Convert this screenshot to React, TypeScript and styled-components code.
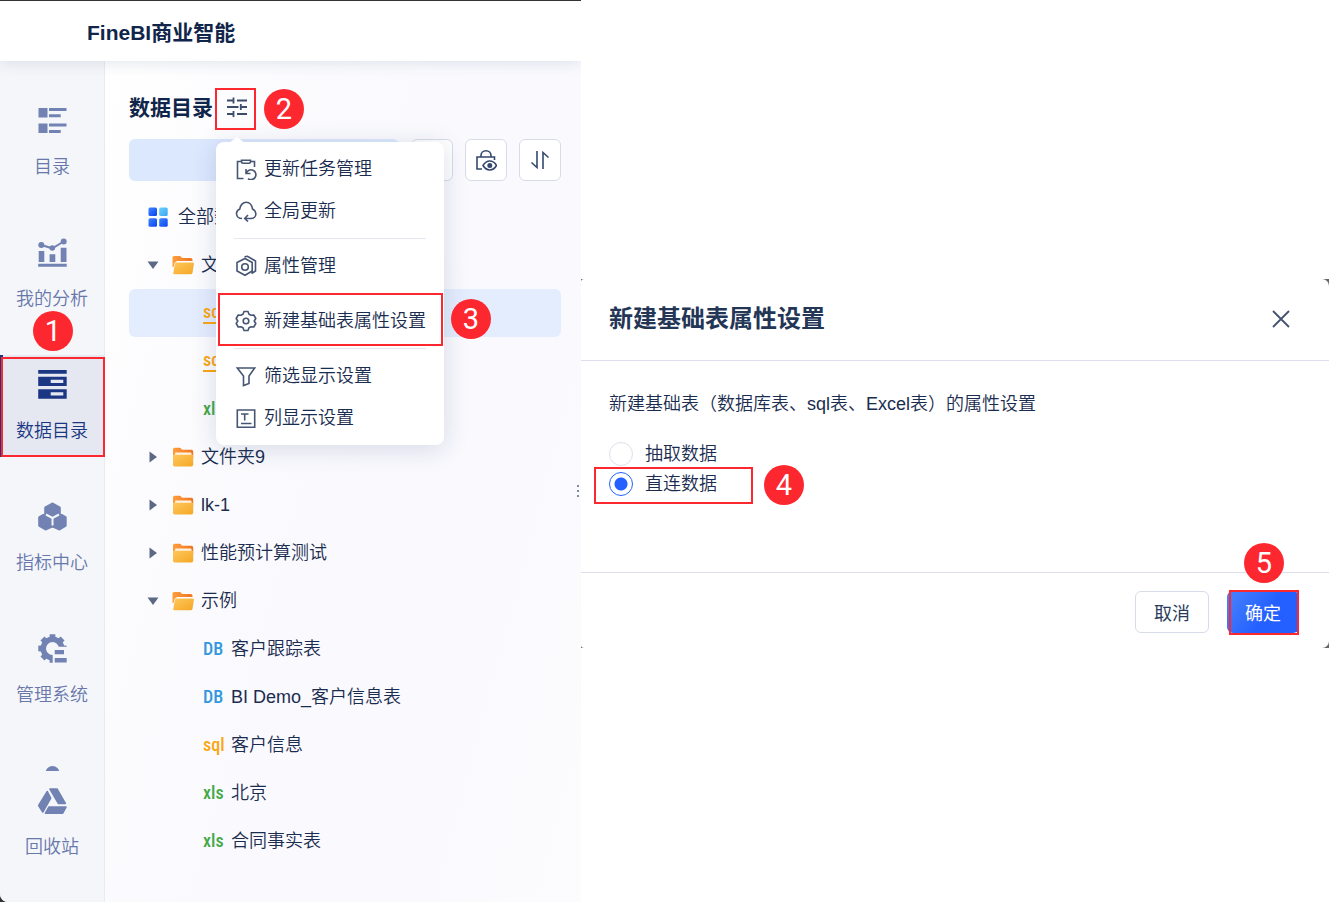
import React from 'react';
import styled, { createGlobalStyle, css } from 'styled-components';

const GlobalStyle = createGlobalStyle`
  *, *::before, *::after { box-sizing: border-box; }
  body { margin: 0; background: #fff; }
  body, button, input {
    font-family: "Liberation Sans", "Noto Sans CJK SC", sans-serif;
    font-size: 18px;
    font-weight: 350;
    color: #1a2d50;
  }
  button { border: 0; background: none; padding: 0; cursor: pointer; }
  h1, h2, p, ul, fieldset { margin: 0; padding: 0; border: 0; list-style: none; }
  svg { display: block; flex: none; }
`;

const Page = styled.div`
  display: flex;
  min-height: 100vh;
`;

/* ---------- annotations ---------- */

const Step = styled.span<{ $top: number; $left: number }>`
  position: absolute;
  top: ${(p) => p.$top}px;
  left: ${(p) => p.$left}px;
  z-index: 5;
  width: 40px;
  height: 40px;
  border-radius: 50%;
  background: #fd282f;
  color: #fff;
  font-family: Roboto, "Liberation Sans", sans-serif;
  font-size: 29px;
  font-weight: 400;
  line-height: 41px;
  text-align: center;
`;

const Outline = styled.span<{ $inset: string }>`
  position: absolute;
  inset: ${(p) => p.$inset};
  z-index: 4;
  border: 2px solid #fd282f;
  pointer-events: none;
`;

/* ---------- workspace ---------- */

const Workspace = styled.div`
  display: flex;
  flex: 0 0 581px;
  padding-top: 1px;
  background: #333;
`;

const Surface = styled.div`
  display: flex;
  flex-direction: column;
  flex: 1;
  overflow: hidden;
  border-bottom-left-radius: 8px;
  background: #fff;
`;

const TopBar = styled.header`
  position: relative;
  z-index: 1;
  display: flex;
  align-items: center;
  height: 60px;
  padding: 4px 87px 0;
  background: #fff;
  box-shadow: 0 2px 14px rgba(30, 50, 90, 0.12);
`;

const Brand = styled.h1`
  font-size: 21px;
  font-weight: 700;
  line-height: 30px;
  color: #10254a;
`;

const Body = styled.div`
  display: flex;
  flex: 1;
`;

const Sidebar = styled.nav`
  display: flex;
  flex-direction: column;
  flex: 0 0 105px;
  padding-bottom: 29px;
  background: #f5f6fa;
  box-shadow: inset -1px 0 #e8ebf2;
`;

const NavList = styled.ul`
  display: flex;
  flex: 1 1 0;
  flex-direction: column;
  gap: 30px;
  min-height: 0;
  padding-top: 30px;
  overflow: hidden;
`;

const NavItem = styled.li`
  position: relative;
  flex: none;
  height: 102px;
`;

const NavButton = styled.button<{ $active?: boolean }>`
  display: flex;
  flex-direction: column;
  align-items: center;
  width: 100%;
  height: 102px;
  gap: 16px;
  padding: 15px 1px 0 0;
  line-height: 30px;
  color: #6878ab;
  svg { color: #7182b3; }
  ${(p) =>
    p.$active &&
    css`
      background: #e5e8f1;
      box-shadow: inset 3px 0 #1b3783;
      color: #1b3783;
      svg { color: #1b3783; }
    `}
`;

const Catalog = styled.main`
  position: relative;
  flex: 1;
  padding: 27px 20px 24px 24px;
  background: linear-gradient(105deg, #fff 0%, #fbfbfe 30%, #f9f9fe 65%, #fcfcfe 100%);
`;

const CatalogHead = styled.div`
  display: flex;
  align-items: center;
  gap: 3px;
  margin-bottom: 9px;
`;

const CatalogTitle = styled.h2`
  font-size: 21px;
  font-weight: 700;
  line-height: 30px;
  padding-bottom: 2px;
  color: #10254a;
`;

const MenuAnchor = styled.div`
  position: relative;
`;

const IconButton = styled.button`
  display: grid;
  place-items: center;
  width: 42px;
  height: 42px;
  padding-bottom: 4px;
  color: #3c4c6b;
`;

const Tools = styled.div`
  display: flex;
  gap: 12px;
  margin-bottom: 12px;
`;

const AddButton = styled.button`
  flex: 1;
  border-radius: 6px;
  background: #dce8fe;
`;

const ToolButton = styled.button`
  display: grid;
  place-items: center;
  width: 42px;
  height: 42px;
  border: 1px solid #d8dce8;
  border-radius: 6px;
  background: #fff;
  color: #35486b;
`;

const depthPadding = { root: 18, folder: 18, file: 74 };

const TreeRow = styled.li<{ $kind: 'root' | 'folder' | 'file'; $selected?: boolean }>`
  display: flex;
  align-items: center;
  height: 48px;
  padding-left: ${(p) => depthPadding[p.$kind]}px;
  border-radius: 6px;
  background: ${(p) => (p.$selected ? '#e4edfe' : 'transparent')};
  line-height: 30px;
  white-space: nowrap;
`;

const Caret = styled.svg`
  width: 12px;
  height: 12px;
  margin-right: 13px;
  fill: #5b6985;
`;

const RowIcon = styled.span<{ $gap: number }>`
  margin-right: ${(p) => p.$gap}px;
`;

const kindColor = { DB: '#3397e0', sql: '#faa614', xls: '#43a848' };

const FileKind = styled.span<{ $kind: 'DB' | 'sql' | 'xls'; $live?: boolean }>`
  width: 21px;
  margin-right: 7px;
  border-bottom: ${(p) => (p.$live ? '2px solid' : '0')};
  color: ${(p) => kindColor[p.$kind]};
  font-family: "Roboto Condensed", "Liberation Sans Narrow", Roboto, sans-serif;
  font-size: 18px;
  font-weight: 500;
  line-height: 20px;
`;

/* ---------- popup menu ---------- */

const Menu = styled.div`
  position: absolute;
  top: 54px;
  left: 0;
  z-index: 3;
  width: 228px;
  padding: 5px 0 7px;
  border-radius: 8px;
  background: #fff;
  box-shadow: 0 4px 26px rgba(30, 50, 100, 0.16);
  &::before {
    content: '';
    position: absolute;
    top: -5px;
    left: 13px;
    border: 8px solid transparent;
    border-top: 0;
    border-bottom: 6px solid #fff;
  }
`;

const MenuItem = styled.button`
  position: relative;
  display: flex;
  align-items: center;
  gap: 7px;
  width: 100%;
  height: 42px;
  padding: 1px 0 0 19px;
  line-height: 30px;
  white-space: nowrap;
  svg { color: #465573; }
`;

const Rule = styled.hr`
  height: 1px;
  margin: 7px 18px 5px;
  border: 0;
  background: #e4e7ee;
`;

const DragHandle = styled.span`
  position: absolute;
  top: 424px;
  right: 2px;
  width: 2px;
  height: 2px;
  background: #7f8aa3;
  box-shadow: 0 5px #7f8aa3, 0 10px #7f8aa3;
`;

/* ---------- dialog ---------- */

const Stage = styled.div`
  flex: 1;
  min-width: 0;
  padding-top: 279px;
`;

const DialogFrame = styled.div`
  background: #666;
`;

const Dialog = styled.section`
  border-radius: 3px 7px 7px 3px;
  background: #fff;
`;

const DialogHead = styled.header`
  display: flex;
  align-items: center;
  justify-content: space-between;
  height: 82px;
  padding: 0 38px 2px 28px;
  border-bottom: 1px solid #dcdeeb;
`;

const DialogTitle = styled.h2`
  font-size: 24px;
  font-weight: 700;
  line-height: 36px;
  color: #243656;
`;

const CloseButton = styled.button`
  color: #43526f;
`;

const DialogBody = styled.div`
  height: 211px;
  padding: 28px 28px 0;
  line-height: 30px;
`;

const Choices = styled.fieldset`
  margin-top: 20px;
`;

const Choice = styled.label`
  position: relative;
  display: flex;
  align-items: center;
  gap: 12px;
  width: 130px;
  height: 30px;
`;

const Radio = styled.input`
  appearance: none;
  width: 24px;
  height: 24px;
  margin: 0;
  border: 1px solid #dde0ea;
  border-radius: 50%;
  &:checked {
    border-color: #2561fe;
    background: radial-gradient(circle, #2561fe 6px, #fff 7px);
  }
`;

const DialogFoot = styled.footer`
  display: flex;
  justify-content: flex-end;
  gap: 18px;
  height: 76px;
  padding: 18px 30px 0;
  border-top: 1px solid #dcdeeb;
`;

const ActionWrap = styled.div`
  position: relative;
  height: 42px;
`;

const Action = styled.button<{ $primary?: boolean }>`
  width: ${(p) => (p.$primary ? 72 : 74)}px;
  height: 42px;
  padding-bottom: 1px;
  border: ${(p) => (p.$primary ? '0' : '1px solid #d8dce8')};
  border-radius: 6px;
  background: ${(p) => (p.$primary ? 'linear-gradient(125deg, #437dff 10%, #2460ff 55%)' : '#fff')};
  color: ${(p) => (p.$primary ? '#fff' : '#2a3c5c')};
  font-weight: 400;
`;

/* ---------- icons ---------- */

const gear = (cx: number, cy: number, outer: number, inner: number, teeth: number) => {
  const points: string[] = [];
  for (let i = 0; i < teeth; i++) {
    const mid = (i * 2 * Math.PI) / teeth - Math.PI / 2;
    const step = Math.PI / teeth;
    [
      [inner, -0.62],
      [outer, -0.5],
      [outer, 0.5],
      [inner, 0.62],
    ].forEach(([r, k]) => {
      const a = mid + step * k;
      points.push(`${(cx + r * Math.cos(a)).toFixed(2)} ${(cy + r * Math.sin(a)).toFixed(2)}`);
    });
  }
  return `M${points.join('L')}Z`;
};

const NavSvg = ({ children }: { children: React.ReactNode }) => (
  <svg width="30" height="30" viewBox="0 0 30 30" fill="currentColor" aria-hidden="true">
    {children}
  </svg>
);

const LineSvg = ({ children }: { children: React.ReactNode }) => (
  <svg width="22" height="22" viewBox="0 0 22 22" fill="none" stroke="currentColor" strokeWidth="1.6" aria-hidden="true">
    {children}
  </svg>
);

const DirectoryIcon = () => (
  <NavSvg>
    <path d="M1.5 2h9v9.500h-9zM12 2h17.500v3H12zM12 8.300h11.700v3H12zM1.500 17.600h9v9.500h-9zM12 17.600h17.500v3H12zM12 24h11.700v3H12z" />
  </NavSvg>
);

const AnalysisIcon = () => (
  <NavSvg>
    <path d="M1.700 13H7.300V24H1.700zM12.600 16.200h5.700V24h-5.700zM23.700 9.700h5.800V24h-5.800zM1.200 25.700h28.500v3H1.200z" />
    <path d="M4.300 7L15.300 10.300L26.700 3.500" fill="none" stroke="currentColor" strokeWidth="2" />
    <circle cx="4.300" cy="7" r="3" />
    <circle cx="15.300" cy="10" r="2.800" />
    <circle cx="26.700" cy="3.600" r="3" />
  </NavSvg>
);

const DataIcon = () => (
  <NavSvg>
    <path fillRule="evenodd" d="M1.200 0h28.500v3.700H1.200zM1.200 6.700h28.500v9.200H1.200zM13.700 9.700v3.200h12.600V9.700zM1.200 19.200h28.500v9.500H1.200zM13.700 22.200v3.200h12.600v-3.200z" />
  </NavSvg>
);

const MetricIcon = () => (
  <NavSvg>
    <path
      stroke="currentColor"
      strokeWidth="3"
      strokeLinejoin="round"
      d="M15.500 2L22.300 5.800V12L28.200 15.500V23.500L22.300 27L15.500 23.800L8.700 27L2.700 23.500V15.500L8.700 12V5.800Z"
    />
    <path d="M9 12.500L15.500 16L22 12.500M15.500 16V23.500" fill="none" stroke="#f5f6fa" strokeWidth="2" />
  </NavSvg>
);

const SystemIcon = () => (
  <NavSvg>
    <clipPath id="system-cut">
      <path d="M0 0H30V12.700H15.700V30H0Z" />
    </clipPath>
    <path
      clipPath="url(#system-cut)"
      fillRule="evenodd"
      d={`${gear(15.5, 14.5, 14.5, 12, 8)}M22 14.500a6.500 6.500 0 1 0 -13 0a6.500 6.500 0 1 0 13 0Z`}
    />
    <path d="M17.700 16h9.300v4.200h-9.300zM17.700 24h12v4.500h-12z" />
  </NavSvg>
);

const PersonIcon = () => (
  <NavSvg>
    <circle cx="15.500" cy="7" r="7" />
    <path d="M2 29a13 12 0 0 1 27 0z" />
  </NavSvg>
);

const RecycleIcon = () => (
  <NavSvg>
    <g stroke="currentColor" strokeWidth="1.600" strokeLinejoin="round">
      <path d="M10.300 5.500L13.700 12L5.800 26L1.700 19.500Z" />
      <path d="M13 3H20L28.300 17.500H21.500Z" />
      <path d="M12 21H29L25.700 27.200H8.500Z" />
    </g>
  </NavSvg>
);

const SlidersIcon = () => (
  <LineSvg>
    <path d="M1 4.500H7.500M11 4.500H21M7.500 1.500V7.500M1 11H12.500M15.500 11H21M14.800 8V14M1 18H7.500M11 18H21M7.500 15V21" strokeWidth="1.800" />
  </LineSvg>
);

const LockEyeIcon = () => (
  <LineSvg>
    <path d="M6 8V6.500a5 4.800 0 0 1 10 0V8M7 20H2V8H19.500V11" />
    <path d="M8 16.500C10 13.300 12.500 12 14.800 12S19.700 13.300 21.500 16.500C19.700 19.700 17 21 14.800 21S10 19.700 8 16.500Z" />
    <circle cx="14.800" cy="16.500" r="1.700" fill="currentColor" />
  </LineSvg>
);

const SortIcon = () => (
  <LineSvg>
    <path d="M8 2V18.500L2.500 13.500M14 20V3.500L19.500 8.500" />
  </LineSvg>
);

const TaskIcon = () => (
  <LineSvg>
    <path d="M8.500 20.500H2.500V3.500H6.500M15.500 3.500H19.500V9M6.500 2.200H15.500V3.500Q15.500 5.200 13.800 5.200H8.200Q6.500 5.200 6.500 3.500ZM11 11V15.500H15.500M11.300 15.300A4.900 4.900 0 1 1 13 20.600" />
  </LineSvg>
);

const CloudIcon = () => (
  <LineSvg>
    <path d="M7 18.500C4 18.500 1.500 16.500 1.500 13.500C1.500 11.500 2.700 10 4.800 9C5.200 5 8 2.200 11.200 2.200S17 5 17.500 9C19.500 10 20.900 11.500 20.900 13.800C20.900 16.500 18.700 18.500 16 18.500H10M13 15L9.700 18.500L13 21.500" />
  </LineSvg>
);

const AttributeIcon = () => (
  <LineSvg>
    <path d="M10 3.500L17.200 7.500V16L10 20.300L2 16V7.500ZM9.500 1.700L12.500 1.300L20.500 6V16L16.500 18.500" />
    <circle cx="10" cy="12" r="3.300" />
  </LineSvg>
);

const GearIcon = () => (
  <LineSvg>
    <path
      strokeLinejoin="round"
      d="M9 1.500H13L14 4.200L16.200 5.300L18.800 5L20.800 8.500L19.200 11L20.800 13.500L18.800 17L16.200 16.700L14 17.800L13 20.500H9L8 17.800L5.800 16.700L3.200 17L1.200 13.500L2.800 11L1.200 8.500L3.200 5L5.800 5.300L8 4.200Z"
    />
    <circle cx="11" cy="11" r="2.800" />
  </LineSvg>
);

const FunnelIcon = () => (
  <LineSvg>
    <path d="M2.300 3H19.700L14 11V18.500L8.500 20.500V11Z" />
  </LineSvg>
);

const ColumnIcon = () => (
  <LineSvg>
    <path d="M2.300 3H19.700V20.300H2.300ZM6 7H13.500M9.700 7V13.500M6 16.500H16.500" />
  </LineSvg>
);

const CloseIcon = () => (
  <svg width="20" height="20" viewBox="0 0 20 20" stroke="currentColor" strokeWidth="1.800" aria-hidden="true">
    <path d="M2 2L18 18M18 2L2 18" />
  </svg>
);

const AllIcon = () => (
  <svg width="22" height="22" viewBox="0 0 22 22" aria-hidden="true">
    <defs>
      <linearGradient id="tile-blue" x1="0" y1="0" x2="1" y2="1">
        <stop offset="0" stopColor="#3f86ff" />
        <stop offset="1" stopColor="#0a44f0" />
      </linearGradient>
      <linearGradient id="tile-sky" x1="0" y1="0" x2="1" y2="1">
        <stop offset="0" stopColor="#6bd0fb" />
        <stop offset="1" stopColor="#3aa5f3" />
      </linearGradient>
    </defs>
    <rect x="1.500" y="1.500" width="8.500" height="8.500" rx="1.500" fill="url(#tile-blue)" />
    <rect x="12.200" y="1.500" width="8.500" height="8.500" rx="1.500" fill="url(#tile-sky)" />
    <rect x="1.500" y="12.200" width="8.500" height="8.500" rx="1.500" fill="url(#tile-blue)" />
    <rect x="12.200" y="12.200" width="8.500" height="8.500" rx="1.500" fill="url(#tile-blue)" />
  </svg>
);

const FolderIcon = ({ open }: { open?: boolean }) => (
  <svg width="22" height="22" viewBox="0 0 22 22" aria-hidden="true">
    <defs>
      <linearGradient id="folder-back" x1="0" y1="0" x2="1" y2="0">
        <stop offset="0" stopColor="#ff9e3c" />
        <stop offset="1" stopColor="#ee7420" />
      </linearGradient>
      <linearGradient id="folder-front" x1="0" y1="0" x2="1" y2="1">
        <stop offset="0" stopColor="#ffc75b" />
        <stop offset="1" stopColor="#f3a726" />
      </linearGradient>
    </defs>
    {open ? (
      <>
        <path d="M.500 3.500Q.500 2 2 2H7.500Q8.500 2 9 2.800L10 4H18.500Q20.500 4 20.500 6V7H5L2.500 9L1.500 13H.500Z" fill="url(#folder-back)" />
        <path d="M4.500 8.500H20.500Q22.200 8.500 21.900 10L20.500 18.800Q20.200 20.300 18.700 20.300H2.700Q1 20.300 1.300 18.700L2.800 10Q3 8.500 4.500 8.500Z" fill="url(#folder-front)" />
      </>
    ) : (
      <>
        <path d="M1 3.200Q1 1.700 2.500 1.700H7.500Q8.500 1.700 9 2.500L10 3.700H19.500Q21.200 3.700 21.200 5.400V12H1Z" fill="url(#folder-back)" />
        <rect x="3" y="6.500" width="16.500" height="5" rx="1" fill="#fff1df" />
        <path d="M1 8.800H21.200V18.800Q21.200 20.600 19.500 20.600H2.700Q1 20.600 1 18.800Z" fill="url(#folder-front)" />
      </>
    )}
  </svg>
);

const FolderRow = ({ name, open }: { name: string; open?: boolean }) => (
  <TreeRow $kind="folder">
    <Caret viewBox="0 0 12 12" aria-hidden="true">
      {open ? <path d="M.500 2.500H11.500L6 10Z" /> : <path d="M2.500 .500L10 6L2.500 11.500Z" />}
    </Caret>
    <RowIcon $gap={7}>
      <FolderIcon open={open} />
    </RowIcon>
    {name}
  </TreeRow>
);

type FileProps = { kind: 'DB' | 'sql' | 'xls'; name?: string; live?: boolean; selected?: boolean };

const FileRow = ({ kind, name, live, selected }: FileProps) => (
  <TreeRow $kind="file" $selected={selected}>
    <FileKind $kind={kind} $live={live}>
      {kind}
    </FileKind>
    {name}
  </TreeRow>
);

export default function App() {
  return (
    <Page>
      <GlobalStyle />
      <Workspace>
        <Surface>
          <TopBar>
            <Brand>FineBI商业智能</Brand>
          </TopBar>
          <Body>
            <Sidebar>
              <NavList>
                <NavItem>
                  <NavButton><DirectoryIcon />目录</NavButton>
                </NavItem>
                <NavItem>
                  <NavButton><AnalysisIcon />我的分析</NavButton>
                </NavItem>
                <NavItem>
                  <NavButton $active><DataIcon />数据目录</NavButton>
                  <Outline $inset="2px 0 0 1px" />
                  <Step $top={-44} $left={33}>1</Step>
                </NavItem>
                <NavItem>
                  <NavButton><MetricIcon />指标中心</NavButton>
                </NavItem>
                <NavItem>
                  <NavButton><SystemIcon />管理系统</NavButton>
                </NavItem>
                <NavItem>
                  <NavButton aria-label="用户"><PersonIcon /></NavButton>
                </NavItem>
              </NavList>
              <NavButton><RecycleIcon />回收站</NavButton>
            </Sidebar>

            <Catalog>
              <CatalogHead>
                <CatalogTitle>数据目录</CatalogTitle>
                <MenuAnchor>
                  <IconButton aria-label="设置" aria-haspopup="menu" aria-expanded="true"><SlidersIcon /></IconButton>
                  <Outline $inset="0 2px 0 -1px" />
                  <Step $top={1} $left={48}>2</Step>
                  <Menu role="menu">
                    <MenuItem role="menuitem"><TaskIcon />更新任务管理</MenuItem>
                    <MenuItem role="menuitem"><CloudIcon />全局更新</MenuItem>
                    <Rule />
                    <MenuItem role="menuitem"><AttributeIcon />属性管理</MenuItem>
                    <Rule />
                    <MenuItem role="menuitem">
                      <GearIcon />新建基础表属性设置
                      <Outline $inset="-6px 1px -5px 2px" />
                      <Step $top={0} $left={235}>3</Step>
                    </MenuItem>
                    <Rule />
                    <MenuItem role="menuitem"><FunnelIcon />筛选显示设置</MenuItem>
                    <MenuItem role="menuitem"><ColumnIcon />列显示设置</MenuItem>
                  </Menu>
                </MenuAnchor>
              </CatalogHead>
              <Tools>
                <AddButton aria-label="新建" />
                <ToolButton aria-label="搜索" />
                <ToolButton aria-label="权限"><LockEyeIcon /></ToolButton>
                <ToolButton aria-label="排序"><SortIcon /></ToolButton>
              </Tools>
              <ul>
                <TreeRow $kind="root">
                  <RowIcon $gap={9}><AllIcon /></RowIcon>
                  全部数据
                </TreeRow>
                <FolderRow name="文件夹" open />
                <FileRow kind="sql" live selected />
                <FileRow kind="sql" live />
                <FileRow kind="xls" />
                <FolderRow name="文件夹9" />
                <FolderRow name="lk-1" />
                <FolderRow name="性能预计算测试" />
                <FolderRow name="示例" open />
                <FileRow kind="DB" name="客户跟踪表" />
                <FileRow kind="DB" name="BI Demo_客户信息表" />
                <FileRow kind="sql" name="客户信息" />
                <FileRow kind="xls" name="北京" />
                <FileRow kind="xls" name="合同事实表" />
              </ul>
              <DragHandle />
            </Catalog>
          </Body>
        </Surface>
      </Workspace>

      <Stage>
        <DialogFrame>
          <Dialog role="dialog" aria-labelledby="dialog-title">
            <DialogHead>
              <DialogTitle id="dialog-title">新建基础表属性设置</DialogTitle>
              <CloseButton aria-label="关闭"><CloseIcon /></CloseButton>
            </DialogHead>
            <DialogBody>
              <p>新建基础表（数据库表、sql表、Excel表）的属性设置</p>
              <Choices>
                <Choice>
                  <Radio type="radio" name="mode" value="extract" />
                  抽取数据
                </Choice>
                <Choice>
                  <Radio type="radio" name="mode" value="direct" defaultChecked />
                  直连数据
                  <Outline $inset="-2px -14px -5px -15px" />
                  <Step $top={-4} $left={155}>4</Step>
                </Choice>
              </Choices>
            </DialogBody>
            <DialogFoot>
              <Action>取消</Action>
              <ActionWrap>
                <Action $primary>确定</Action>
                <Outline $inset="-1px 0 -2px 2px" />
                <Step $top={-48} $left={17}>5</Step>
              </ActionWrap>
            </DialogFoot>
          </Dialog>
        </DialogFrame>
      </Stage>
    </Page>
  );
}
